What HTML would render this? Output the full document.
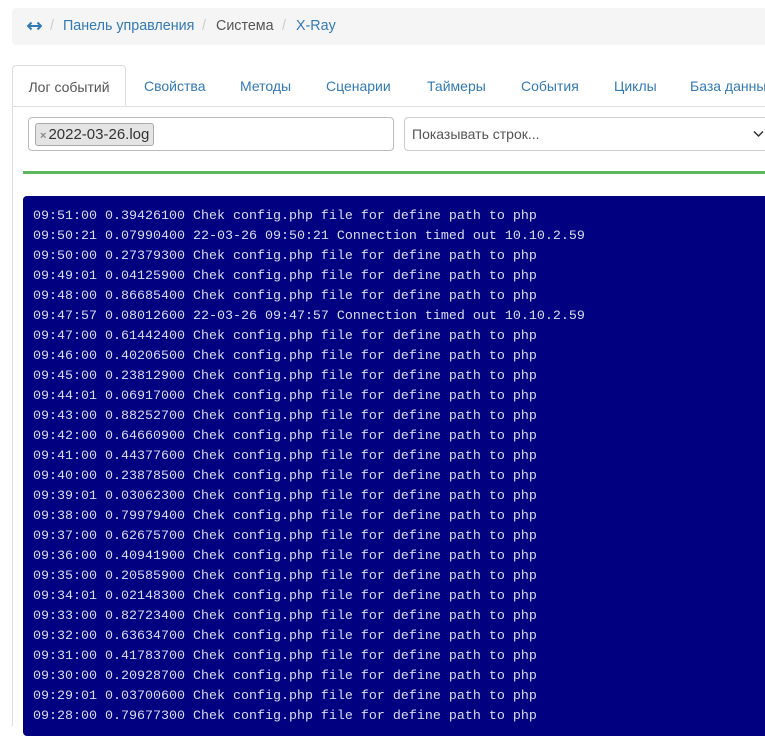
<!DOCTYPE html>
<html><head><meta charset="utf-8"><style>
*{box-sizing:border-box;margin:0;padding:0}
body{width:765px;height:721px;overflow:hidden;background:#fff;font-family:"Liberation Sans",sans-serif;font-size:14px;color:#555;position:relative}
.bc{position:absolute;left:12px;top:8px;width:760px;height:37px;background:#f5f5f5;border-radius:4px;line-height:37px;font-size:14.3px}
.bc a{color:#337ab7}
.bc .t{position:absolute;top:0}
.bc .s{color:#ccc}
.tabs{position:absolute;left:12px;top:106px;width:760px;border-top:1px solid #ddd}
.tab{position:absolute;top:65px;height:41px;line-height:42px;color:#337ab7;font-size:14px}
.tab.act{left:12px;width:114px;border:1px solid #ddd;border-bottom:1px solid #fff;border-radius:4px 4px 0 0;color:#555;text-align:center;background:#fff;z-index:2}
.lb{position:absolute;left:12px;top:106px;width:1px;height:620px;background:#ddd}
.in1{position:absolute;left:28px;top:117px;width:366px;height:34px;border:1px solid #bbb;border-radius:4px}
.tag{position:absolute;left:6px;top:5px;height:23px;padding:0 4px 0 4px;border:1px solid #aaa;border-radius:3px;background:#e4e4e4;color:#333;line-height:21px;font-size:15px}
.tag b{color:#888;font-weight:bold;font-size:11px;margin-right:2px}
.in2{position:absolute;left:404px;top:117px;width:370px;height:34px;border:1px solid #ccc;border-radius:4px;line-height:32px;padding-left:7px;color:#555}
.green{position:absolute;left:23px;top:171px;width:750px;height:3px;background:#5cb85c}
.log{position:absolute;left:23px;top:196px;width:760px;height:540px;background:#000080;border-radius:4px;padding:11px 0 0 10px;font-family:"Liberation Mono",monospace;font-size:13.33px;line-height:20px;color:#dcdcf0;white-space:pre}
</style></head><body>
<div class="bc">
<svg style="position:absolute;left:15px;top:13px" width="15" height="10" viewBox="0 0 15 10"><path d="M2 5H13" stroke="#337ab7" stroke-width="2"/><path d="M4.5 1.5L1 5L4.5 8.5M10.5 1.5L14 5L10.5 8.5" fill="none" stroke="#337ab7" stroke-width="2"/></svg>
<span class="t s" style="left:38px">/</span>
<a class="t" style="left:51px">Панель управления</a>
<span class="t s" style="left:190px">/</span>
<span class="t" style="left:204px">Система</span>
<span class="t s" style="left:270px">/</span>
<a class="t" style="left:284px">X-Ray</a>
</div>
<div class="tabs"></div>
<div class="tab act">Лог событий</div>
<div class="tab" style="left:144px">Свойства</div>
<div class="tab" style="left:240px">Методы</div>
<div class="tab" style="left:326px">Сценарии</div>
<div class="tab" style="left:427px">Таймеры</div>
<div class="tab" style="left:521px">События</div>
<div class="tab" style="left:614px">Циклы</div>
<div class="tab" style="left:690px;white-space:nowrap">База данных</div>
<div class="lb"></div>
<div class="in1"><span class="tag"><b>×</b>2022-03-26.log</span></div>
<div class="in2">Показывать строк...<svg style="position:absolute;left:348px;top:12px" width="11" height="8" viewBox="0 0 11 8"><path d="M1 1.5L5.5 6L10 1.5" fill="none" stroke="#333" stroke-width="1.5"/></svg></div>
<div class="green"></div>
<div class="log">09:51:00 0.39426100 Chek config.php file for define path to php
09:50:21 0.07990400 22-03-26 09:50:21 Connection timed out 10.10.2.59
09:50:00 0.27379300 Chek config.php file for define path to php
09:49:01 0.04125900 Chek config.php file for define path to php
09:48:00 0.86685400 Chek config.php file for define path to php
09:47:57 0.08012600 22-03-26 09:47:57 Connection timed out 10.10.2.59
09:47:00 0.61442400 Chek config.php file for define path to php
09:46:00 0.40206500 Chek config.php file for define path to php
09:45:00 0.23812900 Chek config.php file for define path to php
09:44:01 0.06917000 Chek config.php file for define path to php
09:43:00 0.88252700 Chek config.php file for define path to php
09:42:00 0.64660900 Chek config.php file for define path to php
09:41:00 0.44377600 Chek config.php file for define path to php
09:40:00 0.23878500 Chek config.php file for define path to php
09:39:01 0.03062300 Chek config.php file for define path to php
09:38:00 0.79979400 Chek config.php file for define path to php
09:37:00 0.62675700 Chek config.php file for define path to php
09:36:00 0.40941900 Chek config.php file for define path to php
09:35:00 0.20585900 Chek config.php file for define path to php
09:34:01 0.02148300 Chek config.php file for define path to php
09:33:00 0.82723400 Chek config.php file for define path to php
09:32:00 0.63634700 Chek config.php file for define path to php
09:31:00 0.41783700 Chek config.php file for define path to php
09:30:00 0.20928700 Chek config.php file for define path to php
09:29:01 0.03700600 Chek config.php file for define path to php
09:28:00 0.79677300 Chek config.php file for define path to php</div>
</body></html>
